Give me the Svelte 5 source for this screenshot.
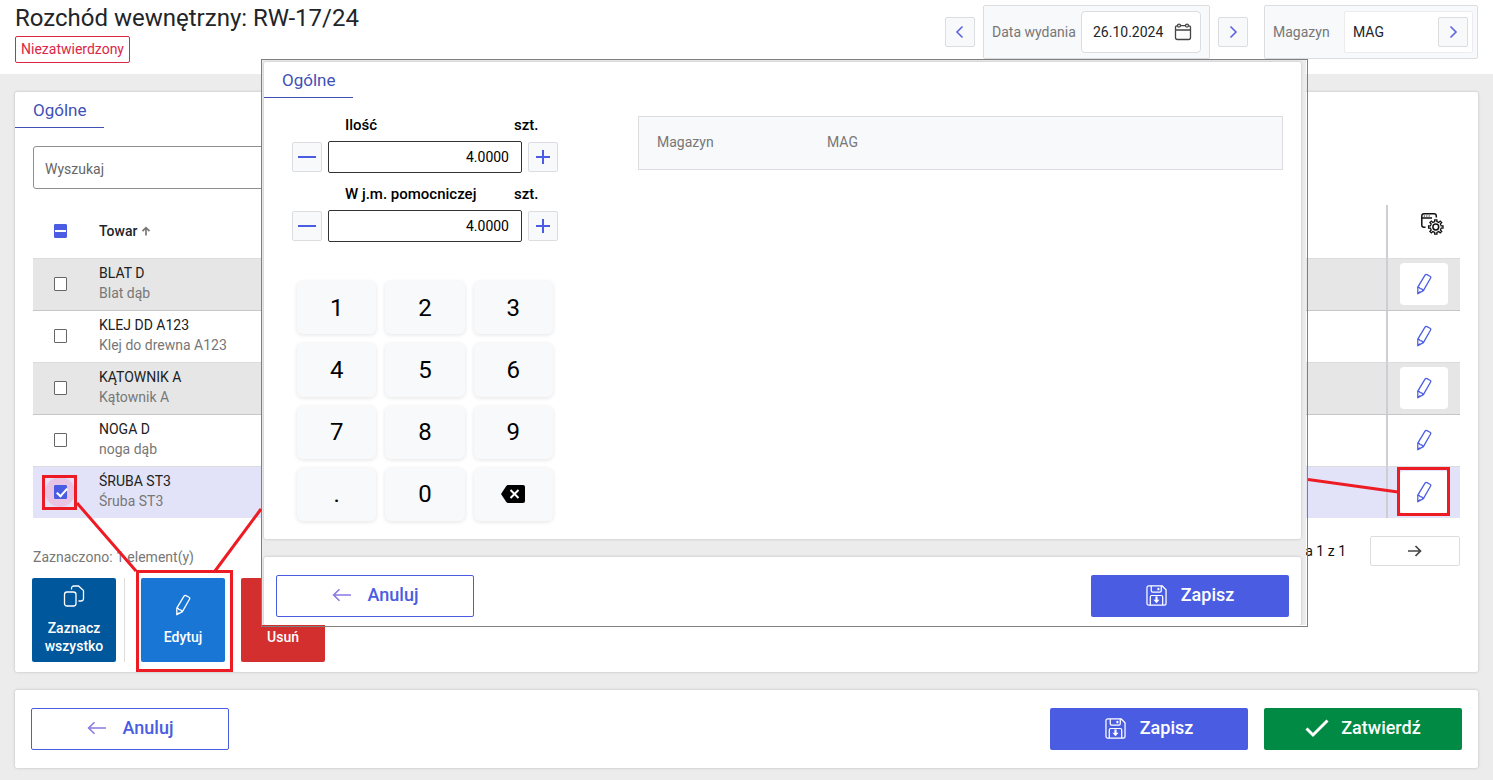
<script>
  let items = $state([
    { code: 'BLAT D', name: 'Blat dąb', checked: false },
    { code: 'KLEJ DD A123', name: 'Klej do drewna A123', checked: false },
    { code: 'KĄTOWNIK A', name: 'Kątownik A', checked: false },
    { code: 'NOGA D', name: 'noga dąb', checked: false },
    { code: 'ŚRUBA ST3', name: 'Śruba ST3', checked: true }
  ]);
  let selected = $derived(items.filter((i) => i.checked).length);
  let fields = $state([
    { id: 'qty', label: 'Ilość', unit: 'szt.', value: '4.0000' },
    { id: 'aux', label: 'W j.m. pomocniczej', unit: 'szt.', value: '4.0000' }
  ]);
  const keys = ['1', '2', '3', '4', '5', '6', '7', '8', '9', '.', '0'];

  function step(field, delta) {
    field.value = (parseFloat(field.value) + delta).toFixed(4);
  }
</script>

{#snippet pencil()}
  <svg class="pencil" viewBox="0 0 16 22" width="16" height="22" aria-hidden="true">
    <path d="M1.8 14.2 9 2.2Q9.8 1 11 1.6L14 3.2Q15.2 4 14.6 5L7.4 17.6 1.8 20.8ZM1.8 14.2Q3.4 14 4 15.6 6 15.4 7.4 17.6M1.8 20.2 4.2 18.8" />
  </svg>
{/snippet}

{#snippet chevron(left)}
  <svg viewBox="0 0 10 14" width="10" height="14" aria-hidden="true">
    <path d={left ? 'M7.5 1.5 2 7l5.5 5.5' : 'M2.5 1.5 8 7l-5.5 5.5'} fill="none" stroke="#5f62e0" stroke-width="1.6" />
  </svg>
{/snippet}

{#snippet cancel()}
  <button class="action outline">
    <svg viewBox="0 0 20 14" width="20" height="14" aria-hidden="true">
      <path d="M19 7H2M7.5 1.2 1.6 7l5.9 5.8" fill="none" stroke="#8a7ae2" stroke-width="1.6" />
    </svg>
    Anuluj
  </button>
{/snippet}

{#snippet save()}
  <button class="action blue">
    <svg viewBox="0 0 22 22" width="21" height="21" fill="none" stroke="#fff" stroke-width="1.3" aria-hidden="true">
      <path d="M3 1H17L21 5V19Q21 21 19 21H3Q1 21 1 19V3Q1 1 3 1Z" />
      <path d="M5.5 1V6Q5.5 7.5 7 7.5H14.5Q16 7.5 16 6V1M4.500 21V12.500Q4.500 11 6 11H16Q17.500 11 17.500 12.500V21" />
      <path d="M13 3V5.500" stroke-width="2" />
      <path d="M11 12V16.500" stroke-width="2.200" />
      <path d="M7.800 15.500H14.200L11 19Z" fill="#fff" stroke="none" />
    </svg>
    Zapisz
  </button>
{/snippet}

<div class="page">
  <header>
    <div>
      <h1>Rozchód wewnętrzny: RW-17/24</h1>
      <span class="status">Niezatwierdzony</span>
    </div>
    <div class="tools">
      <button class="square" aria-label="Poprzedni dzień">{@render chevron(true)}</button>
      <div class="field date">
        <label for="date">Data wydania</label>
        <div class="box">
          <input id="date" type="text" value="26.10.2024" />
          <svg viewBox="0 0 18 18" width="18" height="18" fill="none" stroke="#444" stroke-width="1.3" aria-hidden="true">
            <path d="M1.500 7H16.500M3.500 2.800H3Q1.500 2.800 1.500 4.500V14.500Q1.500 16.500 3.500 16.500H14.500Q16.500 16.500 16.500 14.500V4.500Q16.500 2.800 15 2.800H14.500M6.500 2.600H11.500" />
            <circle cx="5" cy="2.600" r="1.500" /><circle cx="13" cy="2.600" r="1.500" />
          </svg>
        </div>
      </div>
      <button class="square" aria-label="Następny dzień">{@render chevron(false)}</button>
      <div class="field store">
        <label for="store">Magazyn</label>
        <div class="box">
          <input id="store" type="text" value="MAG" />
          <button class="square" aria-label="Wybierz magazyn">{@render chevron(false)}</button>
        </div>
      </div>
    </div>
  </header>

  <main>
    <section class="card">
      <button class="tab">Ogólne</button>
      <div class="search">
        <input type="text" placeholder="Wyszukaj" aria-label="Wyszukaj" />
      </div>
      <div class="tablebox">
        <table>
          <thead>
            <tr>
              <th class="pick"><input type="checkbox" class="partial" aria-label="Wszystkie" /></th>
              <th>
                Towar
                <svg viewBox="0 0 10 10" width="10" height="10" aria-hidden="true">
                  <path d="M5 9.500V1.800M1.500 5.200 5 1.700 8.500 5.200" fill="none" stroke="#777" stroke-width="1.700" />
                </svg>
              </th>
              <th class="act">
                <button class="gear" aria-label="Ustawienia kolumn">
                  <svg viewBox="0 0 24 24" width="24" height="24" fill="none" stroke="#111" stroke-width="1.500" aria-hidden="true">
                    <path d="M5.500 15.200H4Q1.800 15.200 1.800 13V4Q1.800 1.800 4 1.800H14Q16.300 1.800 16.300 4V5.500M1.800 6H12" />
                    <path d="M3.800 4H5M6.200 4H7.400M8.600 4H9.800" stroke-width="1" />
                    <circle cx="15.800" cy="15" r="2.900" />
                    <path d="M14.700 9.600V7.800H16.900V9.600L18.800 10.400 20.200 9.100 21.700 10.600 20.400 12 21.200 13.900H23V16.100H21.200L20.400 18 21.700 19.400 20.200 20.900 18.800 19.600 16.900 20.400V22.200H14.700V20.400L12.800 19.600 11.400 20.900 9.900 19.400 11.200 18 10.400 16.100H8.600V13.900H10.400L11.200 12 9.900 10.600 11.400 9.100 12.800 10.400Z" stroke-width="1.300" />
                  </svg>
                </button>
              </th>
            </tr>
          </thead>
          <tbody>
            {#each items as item}
              <tr class:selected={item.checked}>
                <td class="pick">
                  <span class="ripple" class:on={item.checked}>
                    <input type="checkbox" bind:checked={item.checked} aria-label={item.code} />
                  </span>
                </td>
                <td class="product">
                  <div>{item.code}</div>
                  <div class="sub">{item.name}</div>
                </td>
                <td class="act"><button class="edit" aria-label="Edytuj pozycję">{@render pencil()}</button></td>
              </tr>
            {/each}
          </tbody>
        </table>
      </div>
      <div class="summary">
        <span class="count">Zaznaczono: {selected} element(y)</span>
        <div class="pager">
          <span>Strona 1 z 1</span>
          <button aria-label="Następna strona">
            <svg viewBox="0 0 14 12" width="14" height="12" aria-hidden="true">
              <path d="M0 6H12.500M7.500 1 12.500 6l-5 5" fill="none" stroke="#444" stroke-width="1.700" />
            </svg>
          </button>
        </div>
      </div>
      <div class="tiles">
        <button class="tile navy">
          <svg viewBox="0 0 22 22" width="22" height="22" fill="none" stroke="#fff" stroke-width="1.300" aria-hidden="true">
            <rect x="1.500" y="7" width="11.500" height="14" rx="2.500" />
            <path d="M8.500 4.500V3.500Q8.500 1 11 1H15.500L20.500 5.500V13.500Q20.500 16 18 16H15.500" />
          </svg>
          Zaznacz wszystko
        </button>
        <span class="divider"></span>
        <button class="tile azure">{@render pencil()}Edytuj</button>
        <button class="tile red">
          <svg viewBox="0 0 22 22" width="22" height="22" fill="none" stroke="#fff" stroke-width="1.300" aria-hidden="true">
            <path d="M3 5H19M8 5V2H14V5M5 5 6 20H16L17 5" />
          </svg>
          Usuń
        </button>
      </div>
    </section>

    <footer class="card">
      {@render cancel()}
      <span class="spacer"></span>
      {@render save()}
      <button class="action green">
        <svg viewBox="0 0 24 20" width="24" height="20" aria-hidden="true">
          <path d="M1.500 10.500 8 17 22.500 2.500" fill="none" stroke="#fff" stroke-width="3" />
        </svg>
        Zatwierdź
      </button>
    </footer>
  </main>

  <div class="popup" role="dialog" aria-label="Edycja pozycji">
    <div class="sheet">
      <section class="card">
        <button class="tab">Ogólne</button>
        <div class="form">
          <div class="entry">
            {#each fields as field}
              <div class="captions">
                <label for={field.id}>{field.label}</label>
                <span>{field.unit}</span>
              </div>
              <div class="stepper">
                <button class="square" aria-label="Mniej" onclick={() => step(field, -1)}>
                  <svg viewBox="0 0 18 18" width="18" height="18" aria-hidden="true"><path d="M0 9H18" stroke="#4a5de2" stroke-width="2" /></svg>
                </button>
                <input id={field.id} type="text" bind:value={field.value} />
                <button class="square" aria-label="Więcej" onclick={() => step(field, 1)}>
                  <svg viewBox="0 0 18 18" width="18" height="18" aria-hidden="true"><path d="M2 9H16M9 2V16" stroke="#4a5de2" stroke-width="2" /></svg>
                </button>
              </div>
            {/each}
            <div class="keypad">
              {#each keys as key}
                <button>{key}</button>
              {/each}
              <button aria-label="Usuń znak">
                <svg viewBox="0 0 24 18" width="24" height="18" aria-hidden="true">
                  <path d="M7 0H22Q24 0 24 2V16Q24 18 22 18H7Q6 18 5.300 17L0 9 5.300 1Q6 0 7 0Z" fill="#000" />
                  <path d="M9.500 5 17.500 13M17.500 5 9.500 13" stroke="#fff" stroke-width="2" />
                </svg>
              </button>
            </div>
          </div>
          <dl>
            <dt>Magazyn</dt>
            <dd>MAG</dd>
          </dl>
        </div>
      </section>
      <div class="card foot">
        {@render cancel()}
        {@render save()}
      </div>
    </div>
  </div>

  <svg class="marks left" width="262" height="220" viewBox="0 460 262 220" aria-hidden="true">
    <rect x="43.500" y="476.500" width="32" height="32" />
    <rect x="137.500" y="571.500" width="94" height="99" />
    <path d="M77 503 136 571M215 571 261 509" />
  </svg>
  <svg class="marks right" width="185" height="60" viewBox="1308 460 185 60" aria-hidden="true">
    <rect x="1398.500" y="468.500" width="50" height="46" />
    <path d="M1308 479.500 1398 492" />
  </svg>
</div>

<style>
  :global(body) {
    background: #ececec;
  }
  .page, .page * {
    box-sizing: border-box;
  }
  .page {
    position: relative;
    font: 14px/20px Roboto, sans-serif;
    color: #212529;
  }
  button, input {
    font: inherit;
    color: inherit;
    margin: 0;
  }
  button {
    display: flex;
    align-items: center;
    justify-content: center;
    padding: 0;
    border: 0;
    background: none;
    cursor: pointer;
  }
  svg {
    flex: none;
  }
  header {
    display: flex;
    justify-content: space-between;
    align-items: flex-start;
    height: 74px;
    padding: 0 15px;
    background: #fff;
  }
  h1 {
    margin: 0;
    font-size: 24px;
    line-height: 36px;
    font-weight: 400;
  }
  .status {
    display: inline-block;
    padding: 0 5px;
    border: 1px solid #dc2645;
    border-radius: 2px;
    color: #dc2645;
    line-height: 25px;
  }
  .tools {
    display: flex;
    align-items: center;
    gap: 8px;
    padding-top: 5px;
  }
  .square {
    width: 30px;
    height: 30px;
    flex: none;
    border: 1px solid #dcdde0;
    border-radius: 2px;
    background: #f8f9fb;
  }
  .field {
    display: flex;
    align-items: center;
    justify-content: space-between;
    height: 54px;
    padding: 0 8px;
    border: 1px solid #dcdde0;
    border-radius: 2px;
    background: #f8f9fb;
  }
  .field label {
    color: #777;
  }
  .date {
    width: 227px;
  }
  .store {
    width: 214px;
    margin-left: 8px;
    padding-right: 4px;
  }
  .box {
    display: flex;
    align-items: center;
    justify-content: space-between;
    width: 120px;
    height: 42px;
    padding: 0 8px 0 11px;
    border: 1px solid #dcdde0;
    border-radius: 4px;
    background: #fff;
  }
  .store .box {
    width: 129px;
    padding: 0 4px 0 8px;
    border-color: #ececee;
    border-radius: 2px;
  }
  .box input {
    min-width: 0;
    width: 76px;
    padding: 0;
    border: 0;
    background: none;
  }
  main {
    display: flex;
    flex-direction: column;
    gap: 18px;
    padding: 18px 15px 12px;
  }
  .card {
    background: #fff;
    border-radius: 2px;
    box-shadow: 0 0 3px rgba(0, 0, 0, 0.22);
  }
  main > section {
    padding-bottom: 10px;
  }
  .tab {
    height: 36px;
    padding: 0 18px;
    border-bottom: 1px solid #3f51b5;
    color: #3f51b5;
    font-size: 17px;
  }
  .search {
    padding: 18px 18px 16px;
  }
  .search input {
    display: block;
    width: 50%;
    height: 43px;
    padding: 2px 11px 0;
    border: 1px solid #8f8f8f;
    border-radius: 3px;
  }
  .search input::placeholder {
    color: #666;
  }
  .tablebox {
    padding: 0 18px;
  }
  table {
    width: 100%;
    border-spacing: 0;
    table-layout: fixed;
  }
  th {
    height: 54px;
    padding: 0 0 2px;
    border-bottom: 1px solid #dcdcdc;
    text-align: left;
    font-weight: 500;
  }
  td {
    height: 52px;
    padding: 0 0 3px;
    border-bottom: 1px solid #dcdcdc;
  }
  tbody tr:nth-child(odd) td {
    background: #e6e6e6;
    border-color: #c6c6c6;
  }
  tbody tr.selected td {
    height: 51px;
    background: #e2e3f8;
    border: 0;
  }
  th.pick, td.pick {
    width: 66px;
    padding: 0 12px 2px 0;
    text-align: center;
  }
  th.act, tbody tr td.act {
    width: 74px;
    padding: 0 12px 2px;
    border-left: 2px solid #cdcdd4;
  }
  .gear {
    margin: -14px 0 0 20px;
  }
  .product {
    color: #212121;
  }
  .sub {
    color: #777;
  }
  input[type='checkbox'] {
    appearance: none;
    position: relative;
    display: block;
    width: 13px;
    height: 14px;
    margin: 0 auto;
    border: 1px solid #666;
    border-radius: 1px;
    background: #fff;
  }
  input.partial, input[type='checkbox']:checked {
    border-color: #4a5de2;
    background: #4a5de2;
  }
  input.partial::after {
    content: '';
    position: absolute;
    inset: 5px 0;
    background: #fff;
  }
  input[type='checkbox']:checked::after {
    content: '';
    position: absolute;
    left: 4px;
    top: 0;
    width: 4px;
    height: 9px;
    border: solid #fff;
    border-width: 0 2px 2px 0;
    transform: rotate(42deg);
  }
  .ripple {
    display: flex;
    align-items: center;
    width: 30px;
    height: 30px;
    margin: 0 auto;
    border-radius: 50%;
  }
  .ripple.on {
    background: #e8c5e5;
  }
  .edit {
    width: 48px;
    height: 42px;
    border-radius: 4px;
    background: #fff;
  }
  .pencil path {
    fill: none;
    stroke: #4a5de2;
    stroke-width: 1.3;
    stroke-linejoin: round;
  }
  .tile .pencil path {
    stroke: #fff;
  }
  .summary {
    display: flex;
    justify-content: space-between;
    align-items: flex-end;
    padding: 18px 18px 0;
  }
  .count {
    color: #777;
    line-height: 18px;
  }
  .pager {
    display: flex;
    align-items: center;
    gap: 24px;
    color: #111;
  }
  .pager button {
    width: 90px;
    height: 30px;
    border: 1px solid #dcdde0;
    border-radius: 2px;
  }
  .tiles {
    display: flex;
    gap: 16px;
    padding: 12px 17px 0;
  }
  .tile {
    flex-direction: column;
    gap: 12px;
    width: 84px;
    height: 84px;
    border-radius: 2px;
    color: #fff;
    font-weight: 500;
    line-height: 18px;
  }
  .divider {
    width: 1px;
    margin-left: -8px;
    background: #dcdcdc;
  }
  .navy { background: #00579c; }
  .azure { background: #1976d4; }
  .red { background: #d32f2f; }
  footer {
    display: flex;
    gap: 16px;
    padding: 18px 16px;
  }
  .spacer {
    flex: 1;
  }
  .action {
    gap: 14px;
    width: 198px;
    height: 42px;
    padding-bottom: 2px;
    border-radius: 2px;
    color: #fff;
    font-size: 18px;
    font-weight: 500;
  }
  .outline {
    gap: 16px;
    border: 1px solid #4a5de2;
    background: #fff;
    color: #4a5de2;
  }
  .blue { background: #4a5de2; }
  .green { background: #008a43; gap: 12px; }
  .popup {
    position: absolute;
    left: 261px;
    right: 185px;
    top: 59px;
    padding: 0 1px 1px 0;
    border: 1px solid #7f7f7f;
  }
  .sheet {
    display: flex;
    flex-direction: column;
    gap: 18px;
    padding: 2px 5px 0 2px;
    overflow: hidden;
    background: #ececec;
  }
  .form {
    display: flex;
    justify-content: space-between;
    align-items: flex-start;
    gap: 80px;
    padding: 18px 18px 18px 28px;
  }
  .entry {
    width: 266px;
    flex: none;
    color: #000;
  }
  .captions {
    display: grid;
    grid-template-columns: 169px auto;
    margin: -1px 0 6px 53px;
    font-size: 15px;
    font-weight: 500;
  }
  .stepper {
    display: flex;
    align-items: center;
    gap: 6px;
    margin-bottom: 12px;
  }
  .stepper input {
    flex: 1;
    min-width: 0;
    height: 32px;
    padding: 0 12px;
    border: 1px solid #333;
    border-radius: 2px;
    background: #fff;
    text-align: right;
  }
  .keypad {
    display: grid;
    grid-template-columns: repeat(3, 1fr);
    grid-auto-rows: 1fr;
    gap: 9px;
    height: 240px;
    margin: 39px 5px 0;
  }
  .keypad button {
    border-radius: 6px;
    background: #f8f9fb;
    box-shadow: 0 1px 4px rgba(0, 0, 0, 0.11);
    font-size: 24px;
  }
  dl {
    display: grid;
    grid-template-columns: 170px auto;
    align-items: center;
    flex: 1;
    height: 54px;
    margin: 0;
    padding: 0 18px 2px;
    border: 1px solid #dcdde0;
    background: #f8f9fb;
    color: #777;
  }
  dd {
    margin: 0;
  }
  .foot {
    display: flex;
    justify-content: space-between;
    padding: 18px 12px 8px;
  }
  .marks {
    position: absolute;
    top: 460px;
    fill: none;
    stroke: #ed1c24;
    stroke-width: 3;
    pointer-events: none;
  }
  .left { left: 0; }
  .right { right: 0; }
</style>
